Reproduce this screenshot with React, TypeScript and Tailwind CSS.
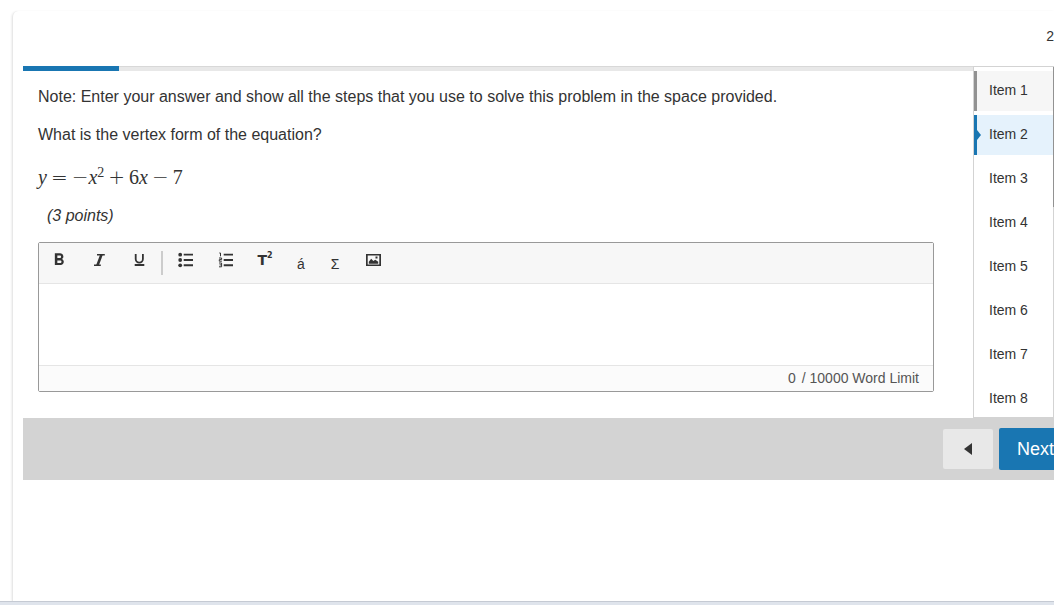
import React from 'react'
import { MdFormatBold } from 'react-icons/md'

const items = ['Item 1', 'Item 2', 'Item 3', 'Item 4', 'Item 5', 'Item 6', 'Item 7', 'Item 8']

const ItalicIcon: React.FC = () => (
  <svg className="w-4 h-4" viewBox="0 0 16 16" fill="none" stroke="currentColor">
    <path d="M6 2.7h7.8M3 13.3h6.8" strokeWidth="1.5" />
    <path d="M10.5 2.5 6.4 13.5" strokeWidth="2.6" />
  </svg>
)

const UnderlineIcon: React.FC = () => (
  <svg className="w-4 h-4" viewBox="0 0 16 16" fill="none" stroke="currentColor">
    <path d="M4.7 2v5a3.6 3.6 0 0 0 7.2 0V2" strokeWidth="1.8" />
    <path d="M3.7 13h9.6" strokeWidth="2" />
  </svg>
)

const BulletsIcon: React.FC = () => (
  <svg className="w-4 h-4" viewBox="0 0 16 16" fill="currentColor">
    <circle cx="2.2" cy="2.7" r="1.9" />
    <circle cx="2.2" cy="8" r="1.9" />
    <circle cx="2.2" cy="13.3" r="1.9" />
    <path d="M5.7 1.7h9.3v1.9H5.7zM5.7 7h9.3v1.9H5.7zM5.7 12.3h9.3v1.9H5.7z" />
  </svg>
)

const NumbersIcon: React.FC = () => (
  <svg className="w-4 h-4" viewBox="0 0 16 16" fill="none" stroke="currentColor">
    <path d="M5.7 2.6h9.3M5.7 8h9.3M5.7 13.3h9.3" strokeWidth="1.9" />
    <path d="M1.3 1h1.2v3.3M1 6h2.6v1.6H1.3v1.6h2.6M1 11h2.6v3.8H1M1.5 12.9h2" strokeWidth="1" />
  </svg>
)

const ImageIcon: React.FC = () => (
  <svg className="w-4 h-4" viewBox="0 0 16 16" fill="currentColor">
    <path fillRule="evenodd" d="M1 2h15v12H1zM2.7 3.5v9h11.6v-9z" />
    <path d="M3.8 11.8V9.8l2.4-3 2.1 2.2 2-1.3 2.9 2v2.1zM10.5 4.6h2v2h-2z" />
  </svg>
)

const tools = [
  { label: 'Bold', width: 'w-10', icon: <MdFormatBold className="w-5 h-5" /> },
  { label: 'Italic', width: 'w-10', icon: <ItalicIcon /> },
  { label: 'Underline', width: 'w-10', icon: <UnderlineIcon /> },
]

const insertTools = [
  { label: 'Bullet list', width: 'w-10', icon: <BulletsIcon /> },
  { label: 'Numbered list', width: 'w-10', icon: <NumbersIcon /> },
  {
    label: 'Superscript',
    width: 'w-[38px]',
    icon: (
      <span className="flex items-start font-['DejaVu_Sans'] text-sm leading-4 font-bold">
        T<span className="text-[8px] leading-2">2</span>
      </span>
    ),
  },
  { label: 'Special character', width: 'w-[34px]', icon: <span className="pt-2 text-sm">á</span> },
  { label: 'Equation', width: 'w-[34px]', icon: <span className="pt-2 text-sm">Σ</span> },
  { label: 'Image', width: 'w-[42px]', icon: <ImageIcon /> },
]

interface ToolButtonProps {
  label: string
  width: string
  icon: React.ReactNode
}

const ToolButton: React.FC<ToolButtonProps> = ({ label, width, icon }) => (
  <button aria-label={label} className={`${width} h-[34px] flex items-center justify-center`}>
    {icon}
  </button>
)

const Editor: React.FC = () => (
  <div className="border border-[#999] rounded-xs mt-[14px]">
    <div className="flex h-[41px] bg-[#f7f7f7] border-b border-[#e5e5e5]">
      {tools.map((tool) => (
        <ToolButton key={tool.label} {...tool} />
      ))}
      <div className="w-[2px] h-6 mt-2 ml-[2px] mr-[3px] bg-[#ccc]"></div>
      {insertTools.map((tool) => (
        <ToolButton key={tool.label} {...tool} />
      ))}
    </div>
    <textarea aria-label="Answer" className="block w-full h-[81px] p-3 resize-none outline-none" />
    <div className="flex justify-end gap-[6px] h-[26px] pr-[14px] border-t border-[#e5e5e5] bg-[#fbfbfb] text-sm leading-6 text-[#555]">
      <span>0</span>
      <span>/ 10000 Word Limit</span>
    </div>
  </div>
)

const Equation: React.FC = () => (
  <p className="flex items-center mt-4 h-7 font-['Liberation_Serif',serif] text-xl leading-7">
    <i>y</i>
    <span className="px-1 font-['DejaVu_Sans'] font-extralight">=</span>
    <span className="font-['DejaVu_Sans'] font-extralight">−</span>
    <i>x</i>
    <sup className="self-start top-0 text-sm leading-5">2</sup>
    <span className="px-1 font-['DejaVu_Sans'] font-extralight">+</span>
    <span>6</span>
    <i>x</i>
    <span className="px-1 font-['DejaVu_Sans'] font-extralight">−</span>
    <span>7</span>
  </p>
)

const ItemList: React.FC = () => (
  <aside className="w-[81px] shrink-0 flex border border-r-0 border-[#d3d3d3]">
    <ul className="flex-1 h-0 min-h-full pt-1 overflow-hidden flex flex-col gap-1 text-sm">
      {items.map((item, index) => (
        <li key={item} className="shrink-0">
          {index === 0 && (
            <button className="w-full h-10 pl-3 pb-[2px] text-left bg-[#f6f6f6] border-l-[3px] border-[#929292]">
              {item}
            </button>
          )}
          {index === 1 && (
            <button className="relative w-full h-10 pl-3 pb-[2px] text-left bg-[#e5f2fc] border-l-[3px] border-[#1976b2]">
              <span className="absolute left-0 top-[15px] border-y-5 border-l-4 border-y-transparent border-l-[#1976b2]"></span>
              {item}
            </button>
          )}
          {index > 1 && <button className="w-full h-10 pl-[15px] pb-[2px] text-left">{item}</button>}
        </li>
      ))}
    </ul>
    <div className="w-px bg-[#d3d3d3]">
      <div className="h-2/5 bg-[#929292]"></div>
    </div>
  </aside>
)

const App: React.FC = () => {
  return (
    <div className="h-screen flex flex-col overflow-hidden bg-white pt-[11px] font-['Liberation_Sans',sans-serif] text-[#333]">
      <div className="flex-1 ml-3 pl-[10px] border-l border-[#e8e8e8] rounded-tl-md shadow-[-1px_0_2px_rgba(0,0,0,0.06)]">
        <header className="h-[55px] flex justify-end pt-[15px] text-sm">2</header>
        <div className="flex">
          <main className="flex-1">
            <div className="h-[5px] bg-[#e8e8e8] border-t border-[#d8d8d8]">
              <div className="w-24 h-[5px] -mt-px bg-[#1976b2]"></div>
            </div>
            <div className="pl-[15px] pr-[39px] pt-[14px] pb-[26px]">
              <p>Note: Enter your answer and show all the steps that you use to solve this problem in the space provided.</p>
              <p className="mt-[14px]">What is the vertex form of the equation?</p>
              <Equation />
              <p className="mt-[13px] pl-[9px] italic">(3 points)</p>
              <Editor />
            </div>
          </main>
          <ItemList />
        </div>
        <footer className="h-[62px] flex items-center justify-end gap-[6px] bg-[#d3d3d3]">
          <button
            aria-label="Previous"
            className="w-[50px] h-10 flex items-center justify-center rounded-xs bg-[#e8e8e8]"
          >
            <svg className="w-2 h-3" viewBox="0 0 8 12" fill="currentColor">
              <path d="M8 0v12L0 6z" />
            </svg>
          </button>
          <button className="h-[42px] pl-[18px] rounded-l-xs bg-[#1976b2] text-lg text-white">Next</button>
        </footer>
      </div>
      <div className="h-1 shrink-0 border-t border-[#c5cad3] bg-[#dfe4ec]"></div>
    </div>
  )
}

export default App
